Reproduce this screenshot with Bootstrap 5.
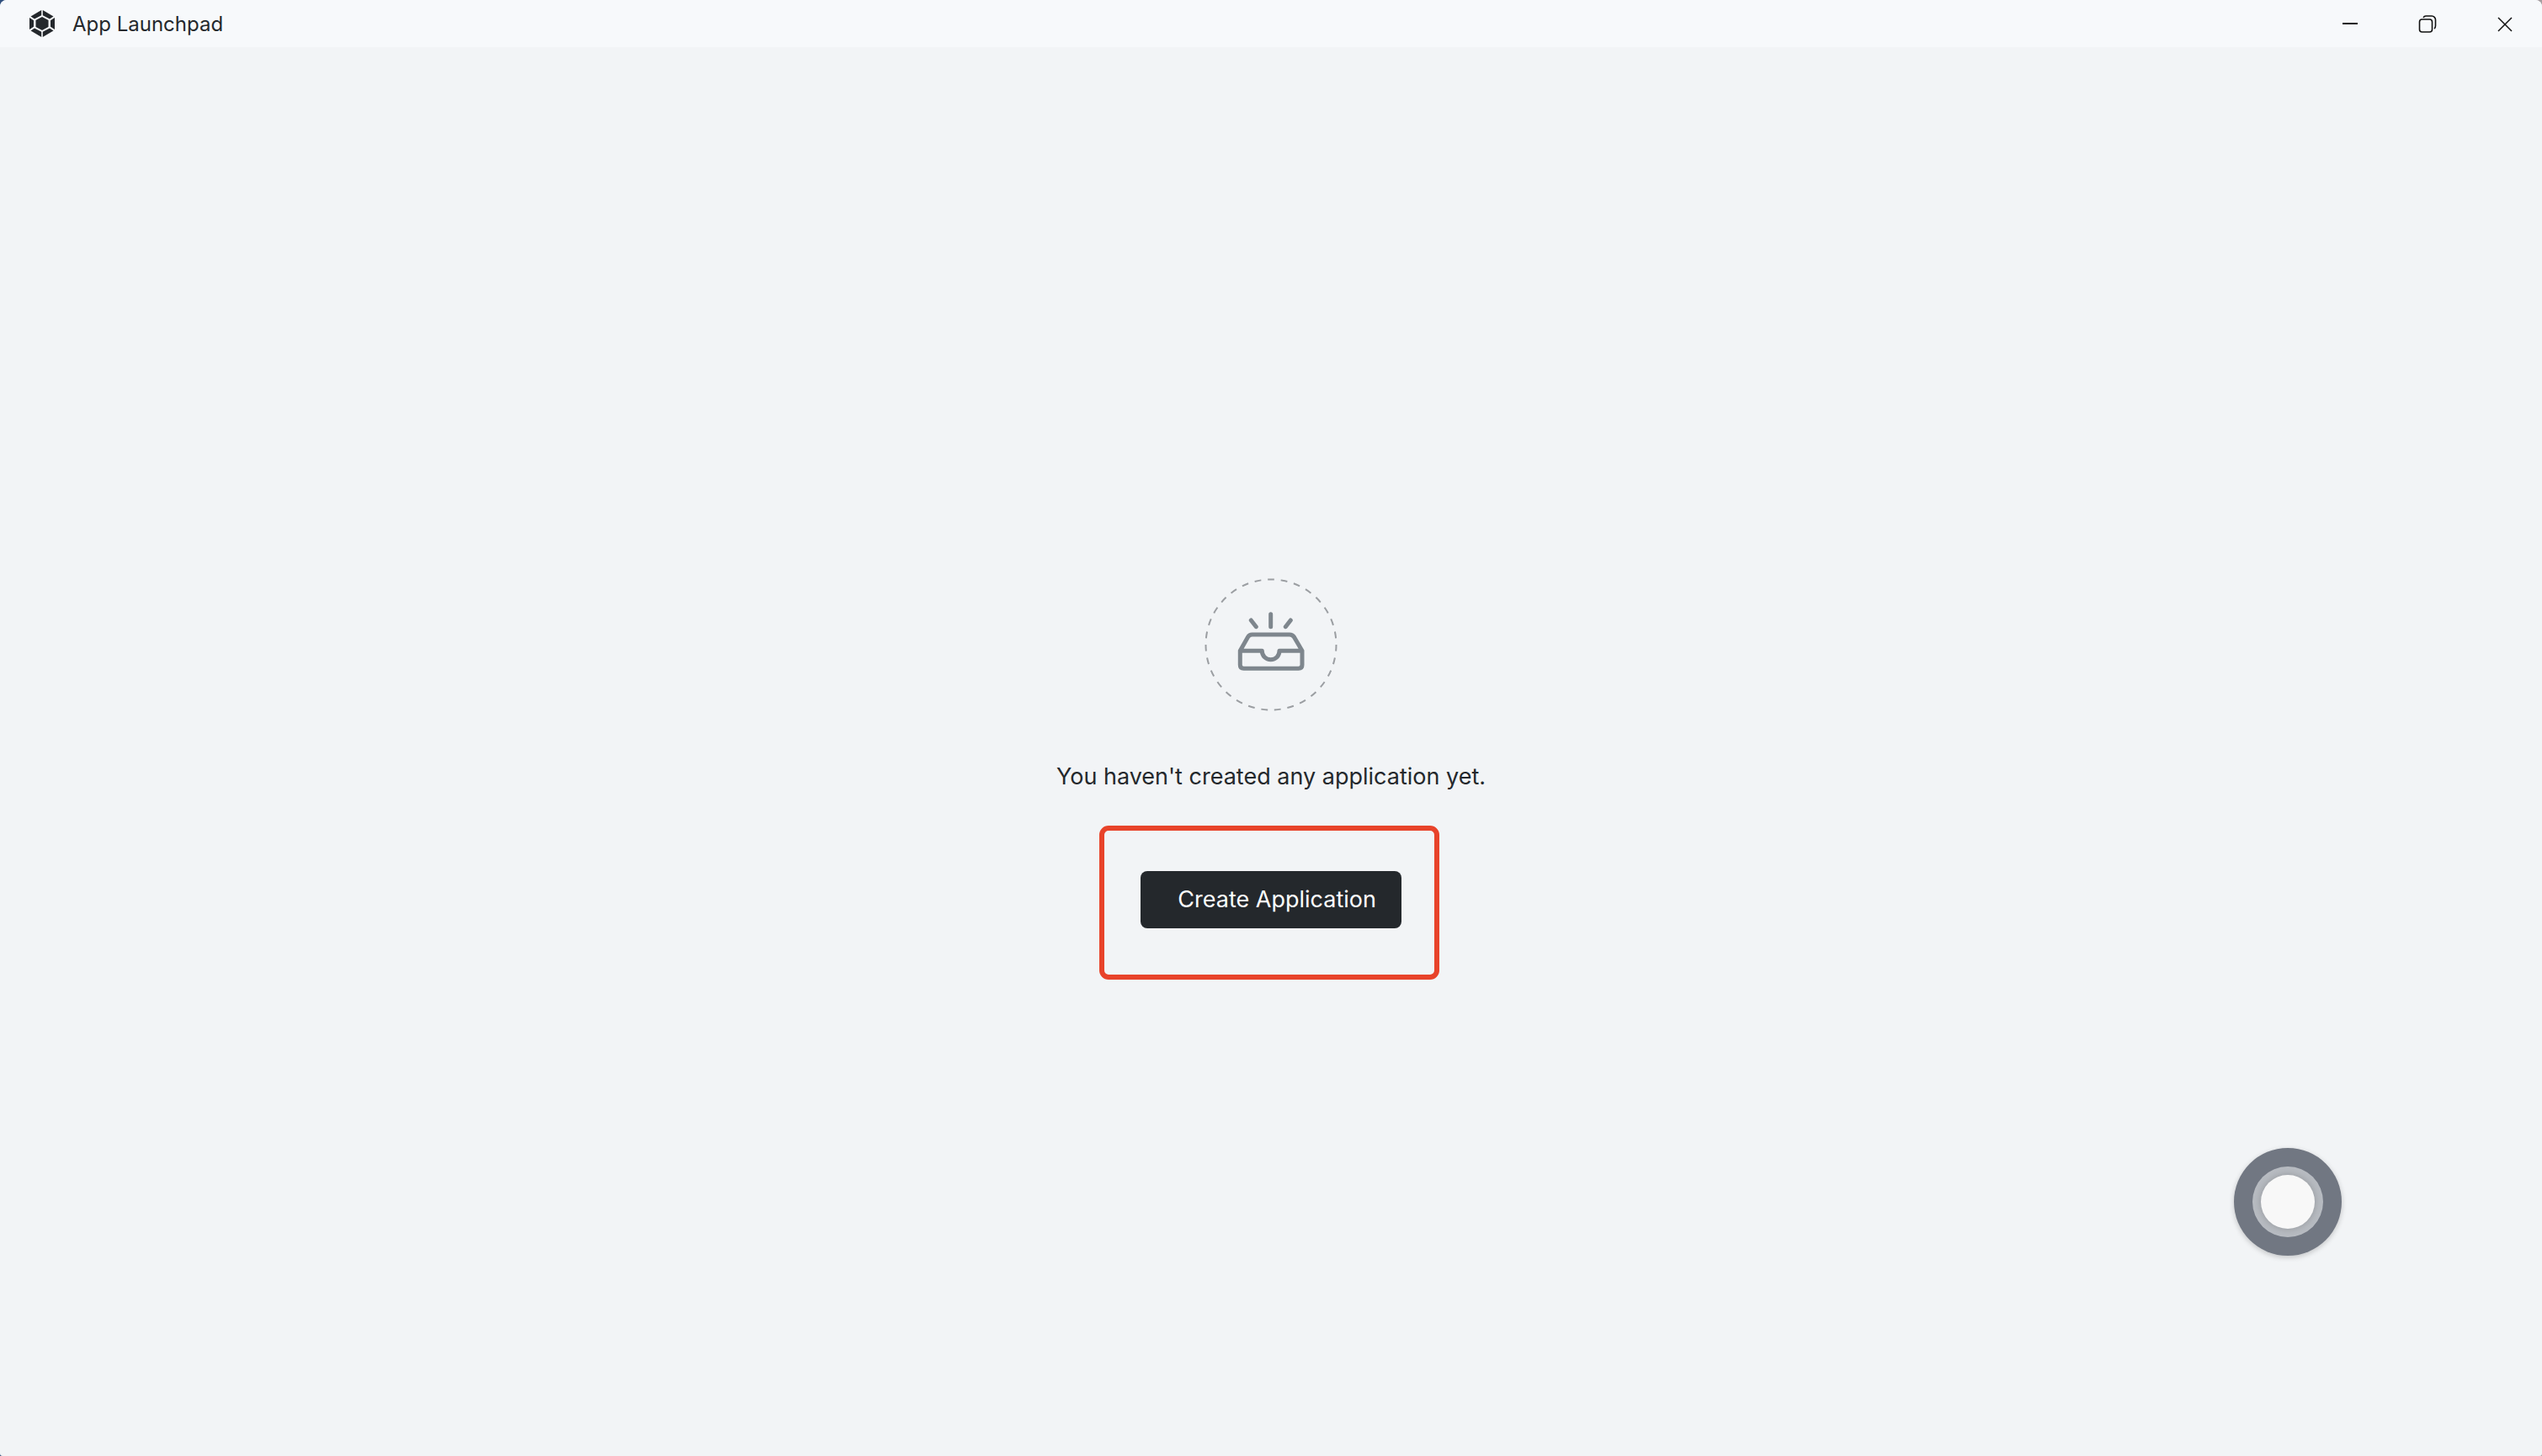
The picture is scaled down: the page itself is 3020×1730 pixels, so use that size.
<!DOCTYPE html>
<html lang="en">
<head>
<meta charset="utf-8">
<meta name="viewport" content="width=device-width, initial-scale=1">
<title>App Launchpad</title>
<link href="https://cdn.jsdelivr.net/npm/bootstrap@5.3.0/dist/css/bootstrap.min.css" rel="stylesheet">
<style>
  body { font-family: Inter, "Liberation Sans", sans-serif; color: #24282c; background: linear-gradient(90deg, #2f4f7d 50%, #a59d9f 50%); }
  .app-window { background: #f2f4f6; border-radius: 8px 8px 3px 3px; }
  .title-bar { height: 56px; padding-left: 34px; background: #f7f9fb; }
  .app-name { padding-top: 2px; font-size: 24px; line-height: 32px; font-weight: 400; }
  .window-btn { width: 92px; height: 56px; padding: 0 0 0 4px; color: #111; }
  .empty-text { font-size: 27px; line-height: 42px; margin-top: 54px; margin-bottom: 91px; }
  .create-btn { width: 310px; height: 68px; padding: 0 30px; border-radius: 8px; font-size: 27px; line-height: 36px; color: #fff; background: #24282c; }
  .create-btn:hover { color: #fff; background: #363c42; }
  .highlight-frame { inset: -54px -45px -61px -49px; border: 6px solid #e8432a; border-radius: 11px; pointer-events: none; }
  .assist-ball { right: 238px; bottom: 238px; width: 128px; height: 128px; background: #717782; box-shadow: 0 2px 6px rgba(0,0,0,.2); }
  .assist-ring { width: 84px; height: 84px; background: #b7bbc1; }
  .assist-dot { width: 64px; height: 64px; background: #f8f8f8; box-shadow: 0 0 8px rgba(0,0,0,.2); }
</style>
<script defer src="https://cdn.jsdelivr.net/npm/bootstrap@5.3.0/dist/js/bootstrap.bundle.min.js"></script>
</head>
<body>
<div class="app-window min-vh-100 d-flex flex-column overflow-hidden">
  <header class="title-bar d-flex align-items-center justify-content-between">
    <div class="d-flex align-items-center">
      <svg width="32" height="34" viewBox="0 0 32 34" fill="#24282c" aria-hidden="true">
        <path d="M15.200 1v6.300L7 11.500 2.500 8.500zM16.800 1v6.300L25 11.500l4.500-3zM1 10l5 3.300v7.400L1 24zM31 10l-5 3.300v7.400l5 3.300zM2.500 25.500L7 22.500l8.200 4.200V33zM29.500 25.500l-4.500-3-8.200 4.200V33z"/>
        <path d="M16 9l7.500 4v8L16 25l-7.500-4v-8z"/>
      </svg>
      <h1 class="app-name mb-0 ms-3 ps-1">App Launchpad</h1>
    </div>
    <div class="d-flex">
      <button type="button" class="window-btn btn border-0 rounded-0" aria-label="Minimize">
        <svg width="22" height="22" viewBox="0 0 22 22" fill="none" stroke="currentColor" stroke-width="2"><path d="M2 10h18"/></svg>
      </button>
      <button type="button" class="window-btn btn border-0 rounded-0" aria-label="Restore">
        <svg width="22" height="22" viewBox="0 0 22 22" fill="none" stroke="currentColor" stroke-width="1.600"><rect x="1.500" y="5" width="15" height="15" rx="3"/><path d="M6 3Q7 1 9 1h7a4.500 4.500 0 0 1 4.500 4.500v7q0 2.500-1.500 3.500"/></svg>
      </button>
      <button type="button" class="window-btn btn border-0 rounded-0" aria-label="Close">
        <svg width="22" height="22" viewBox="0 0 22 22" fill="none" stroke="currentColor" stroke-width="1.500"><path d="M3 3l16 16M19 3L3 19"/></svg>
      </button>
    </div>
  </header>

  <main class="flex-grow-1 d-flex flex-column align-items-center justify-content-center">
    <svg width="164" height="164" viewBox="0 0 164 164" fill="none" stroke="#7e868d" stroke-width="5" stroke-linecap="round" stroke-linejoin="round" aria-hidden="true">
      <circle cx="82" cy="82" r="77.500" pathLength="310" stroke="#9b9ea2" stroke-width="2" stroke-linecap="butt" stroke-dasharray="5 5" stroke-dashoffset="2.500" transform="rotate(-90 82 82)"/>
      <path d="M81.700 45.700v15M58.300 53l6 7.700M105.300 53l-6 7.700"/>
      <path d="M45.300 89.300L54.500 73Q56.300 70 59.500 70h44.500Q107.500 70 109.500 73L119 89.300V106q0 4.300-4.300 4.300H49.600q-4.300 0-4.300-4.300zM45.300 89.300h26c0 6 4.500 10.400 10.400 10.400S92 95.300 92 89.300h27"/>
    </svg>
    <p class="empty-text text-center">You haven't created any application yet.</p>
    <div class="position-relative">
      <button type="button" class="create-btn btn border-0 d-flex align-items-center justify-content-end">Create Application</button>
      <div class="highlight-frame position-absolute"></div>
    </div>
  </main>
</div>

<button type="button" class="assist-ball btn position-fixed p-0 border-0 rounded-circle d-flex align-items-center justify-content-center" aria-label="Quick menu">
  <span class="assist-ring rounded-circle d-flex align-items-center justify-content-center"><span class="assist-dot rounded-circle"></span></span>
</button>
</body>
</html>
